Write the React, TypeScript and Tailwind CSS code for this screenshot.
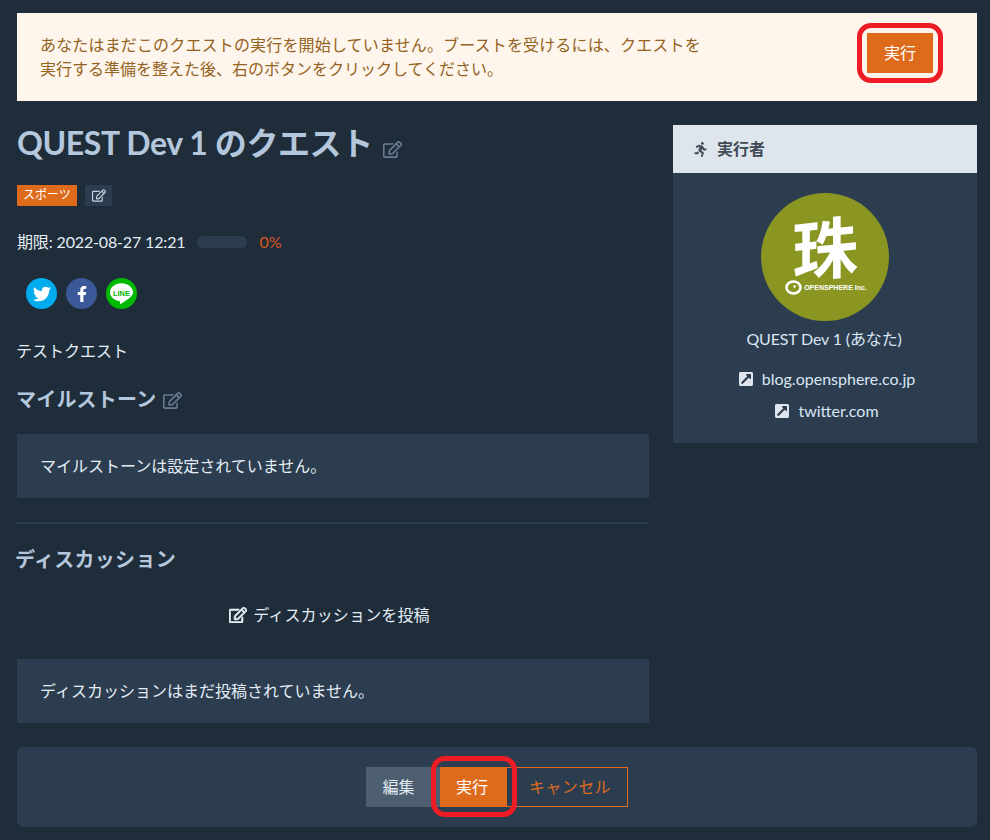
import { FaRegEdit, FaRunning, FaTwitter, FaFacebookF, FaExternalLinkSquareAlt } from "react-icons/fa";

const LineIcon = () => (
  <svg viewBox="0 0 31 31" className="w-[31px] h-[31px]">
    <circle cx="15.5" cy="15.5" r="15.5" fill="#00b900" />
    <path
      transform="translate(15.5 15) scale(1.15) translate(-15.5 -15)"
      d="M15.5 6.5c-5.500 0-10 3.500-10 7.900 0 3.900 3.500 7.100 8.300 7.800.7.200.5.900.4 1.500-.1.700.2 1 1 .6 1.700-.9 6.600-3.900 8.800-6.400 1-1.200 1.500-2.300 1.500-3.500 0-4.400-4.500-7.900-10-7.900z"
      fill="#fff"
    />
    <text x="15.5" y="17.500" textAnchor="middle" fontSize="7.500" fontWeight="900" fill="#00b900" fontFamily="Liberation Sans, sans-serif">
      LINE
    </text>
  </svg>
);

const Avatar = () => (
  <div className="w-32 h-32 rounded-full bg-[#8a9621] flex flex-col items-center justify-start overflow-hidden">
    <span className="mt-[16px] ml-[-1px] text-[66px] leading-[72px] font-bold text-white font-['Noto_Sans_CJK_JP',sans-serif] rotate-[-6deg] skew-x-[-6deg]">
      珠
    </span>
    <div className="flex items-center gap-[2px] mt-[-1px] ml-[2px]">
      <svg viewBox="0 0 17 15" className="w-[17px] h-[15px]">
        <ellipse cx="8.500" cy="7.500" rx="7" ry="6" fill="none" stroke="#fff" strokeWidth="2.500" />
        <circle cx="9.500" cy="6.500" r="1.200" fill="#fff" />
      </svg>
      <span className="text-[7px] leading-none font-bold text-white font-['Liberation_Sans',sans-serif] whitespace-nowrap">
        OPENSPHERE Inc.
      </span>
    </div>
  </div>
);

const SiteLink = ({ label }: { label: string }) => (
  <div className="h-8 flex items-center justify-center gap-[9px] pl-1 text-[#d8e6f3]">
    <FaExternalLinkSquareAlt className="w-[14px] h-[16px] text-[#dee5ed]" />
    <span>{label}</span>
  </div>
);

export default function App() {
  return (
    <div className="min-h-[840px] bg-[#1f2d3b] pl-[17px] pr-[13px] py-[13px] text-[16px] leading-6 text-[#e4edf5] font-['Lato','Noto_Sans_CJK_JP',sans-serif]">
      <div className="h-[88px] bg-[#fef6ec] flex items-center justify-between pl-[23px] pr-[44px] text-[#946221]">
        <p className="whitespace-nowrap">
          <span className="tracking-[0.16px]">あなたはまだこのクエストの実行を開始していません。ブーストを受けるには、クエストを</span>
          <br />
          実行する準備を整えた後、右のボタンをクリックしてください。
        </p>
        <div className="relative mb-2">
          <button className="block w-[66px] h-10 bg-[#de6b1c] text-white">実行</button>
          <div className="absolute -inset-x-[10px] -inset-y-[10px] border-[5px] border-[#ee1c25] rounded-[14px]" />
        </div>
      </div>

      <div className="flex gap-6 mt-6">
        <div className="w-[632px]">
          <h1 className="flex items-center h-[36px] mb-[24px] text-[32px] leading-[36px] font-bold tracking-[-0.4px] text-[#b5c7dc]">
            QUEST Dev 1 のクエスト
            <FaRegEdit className="w-[19px] h-[17px] ml-[10px] mt-[12px] text-[#6a7b92]" />
          </h1>
          <div className="flex gap-2">
            <span className="h-[21px] w-[60px] bg-[#de6b1c] text-white text-[12px] leading-[20px] text-center">スポーツ</span>
            <span className="h-[21px] w-[27px] bg-[#2c3d4f] flex items-center justify-center">
              <FaRegEdit className="w-[14px] h-[13px] text-[#c8d4e0]" />
            </span>
          </div>
          <div className="flex items-center mt-6">
            <span className="tracking-[-0.15px]">期限: 2022-08-27 12:21</span>
            <div className="w-[50px] h-3 rounded-full bg-[#2c3d4f] ml-3" />
            <span className="ml-3 text-[#d9571c]">0%</span>
          </div>
          <div className="flex gap-[9px] mt-6 pl-[9px]">
            <span className="w-[31px] h-[31px] rounded-full bg-[#00aced] flex items-center justify-center">
              <FaTwitter className="w-[18px] h-[18px] text-white" />
            </span>
            <span className="w-[31px] h-[31px] rounded-full bg-[#3b5998] flex items-center justify-center">
              <FaFacebookF className="w-[16px] h-[16px] text-white" />
            </span>
            <LineIcon />
          </div>
          <p className="mt-[30px] -ml-px">テストクエスト</p>

          <h2 className="flex items-center h-[30px] mt-[21px] -ml-px text-[20px] font-bold tracking-[0.2px] text-[#b5c7dc]">
            マイルストーン
            <FaRegEdit className="w-[19px] h-[17px] ml-[7px] mt-[3px] text-[#6a7b92]" />
          </h2>
          <div className="mt-5 h-16 bg-[#2c3d4f] pl-[23px] flex items-center">マイルストーンは設定されていません。</div>
          <hr className="mt-6 border-0 h-[2px] bg-[#2c3d4f]" />

          <h2 className="h-[30px] leading-[30px] mt-5 -ml-[2px] text-[20px] font-bold tracking-[0.3px] text-[#b5c7dc]">ディスカッション</h2>
          <div className="flex items-center justify-center gap-[6px] mt-[29px] pr-[7px]">
            <FaRegEdit className="w-[18px] h-[16px] stroke-[20px]" />
            <span className="tracking-[0.15px]">ディスカッションを投稿</span>
          </div>
          <div className="mt-8 h-16 bg-[#2c3d4f] pl-[23px] flex items-center">ディスカッションはまだ投稿されていません。</div>
        </div>

        <aside className="w-[304px] self-start">
          <div className="h-12 bg-[#dee5ed] flex items-center pl-5 gap-[9px] font-bold text-[#3f4a56]">
            <FaRunning className="w-[15px] h-[15px]" />
            <span>実行者</span>
          </div>
          <div className="h-[270px] bg-[#2c3d4f] pt-5 flex flex-col items-center text-[#d8e6f3]">
            <Avatar />
            <p className="mt-[6px] -ml-[2px] tracking-[-0.15px]">QUEST Dev 1 (あなた)</p>
            <div className="mt-[12px]">
              <SiteLink label="blog.opensphere.co.jp" />
              <SiteLink label="twitter.com" />
            </div>
          </div>
        </aside>
      </div>

      <div className="mt-6 h-20 rounded-md bg-[#2c3d4f] flex items-center justify-center">
        <button className="w-[74px] h-10 bg-[#4d5e70] pr-[9px] text-[#e4edf5]">編集</button>
        <div className="relative">
          <button className="block w-[66px] h-10 bg-[#de6b1c] text-white pr-[2px]">実行</button>
          <div className="absolute -left-[9px] -right-[11px] -top-[11px] -bottom-[10px] border-[5px] border-[#ee1c25] rounded-[14px]" />
        </div>
        <button className="w-[122px] h-10 border border-[#de6b1c] pl-[6px] tracking-[0.4px] text-[#de6b1c]">キャンセル</button>
      </div>
    </div>
  );
}
